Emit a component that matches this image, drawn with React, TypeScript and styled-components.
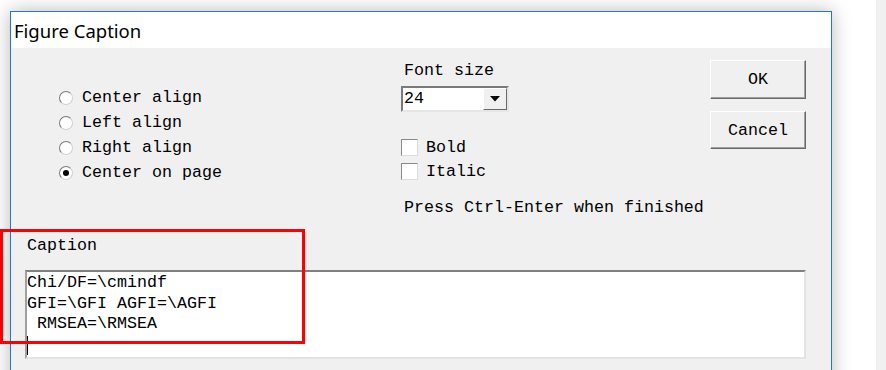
import React from "react";
import styled, { createGlobalStyle } from "styled-components";

const GlobalStyle = createGlobalStyle`
  html, body {
    margin: 0;
    padding: 0;
    background: #ffffff;
    overflow: hidden;
  }
`;

const mono = `"Liberation Mono", "DejaVu Sans Mono", monospace`;

const Desktop = styled.div`
  position: relative;
  width: 886px;
  height: 370px;
  display: flex;
  overflow: hidden;
  background: #ffffff;
`;

const WindowArea = styled.div`
  flex: 1;
  padding: 11px 0 0 10px;
`;

const SideStrip = styled.div`
  width: 10px;
  background: #f0f0f0;
`;

const DialogWindow = styled.div`
  width: 820px;
  height: 420px;
  border: 1px solid #1f7ad4;
  background: #f0f0f0;
  box-shadow: 0 0 18px rgba(0, 0, 0, 0.28);
  display: flex;
  flex-direction: column;
`;

const TitleBar = styled.div`
  height: 36px;
  background: #ffffff;
  display: flex;
  align-items: center;
  padding-left: 3px;
  font-family: "Noto Sans", "Open Sans", sans-serif;
  font-size: 18.5px;
  color: #000;
`;

const Body = styled.div`
  flex: 1;
  display: flex;
  flex-direction: column;
  font-family: ${mono};
  font-size: 16.67px;
  color: #000;
`;

const TopSection = styled.div`
  height: 188px;
  display: flex;
`;

const AlignColumn = styled.div`
  width: 342px;
  padding: 37px 0 0 48px;
`;

const OptionRow = styled.div`
  height: 25px;
  display: flex;
  align-items: center;
  white-space: pre;
`;

const Radio = styled.span<{ $checked?: boolean }>`
  width: 14px;
  height: 14px;
  box-sizing: border-box;
  border-radius: 50%;
  border: 1px solid #7a7a7a;
  border-right-color: #d0d0d0;
  border-bottom-color: #d0d0d0;
  background: #ffffff;
  margin-right: 9px;
  display: flex;
  align-items: center;
  justify-content: center;
  &::after {
    content: "";
    display: ${(p) => (p.$checked ? "block" : "none")};
    width: 6px;
    height: 6px;
    border-radius: 50%;
    background: #000;
  }
`;

const FormatColumn = styled.div`
  width: 309px;
  padding-top: 13px;
  display: flex;
  flex-direction: column;
`;

const Label = styled.div<{ $indent?: number }>`
  height: 20px;
  line-height: 20px;
  padding-left: ${(p) => p.$indent ?? 0}px;
  white-space: pre;
`;

const Select = styled.div`
  margin-top: 5px;
  width: 108px;
  height: 26px;
  box-sizing: border-box;
  border: 2px solid;
  border-color: #7a7a7a #e6e6e6 #e6e6e6 #7a7a7a;
  background: #ffffff;
  display: flex;
  align-items: center;
  justify-content: space-between;
`;

const SelectValue = styled.span`
  padding-left: 1px;
  line-height: 20px;
`;

const DropButton = styled.span`
  width: 24px;
  height: 22px;
  box-sizing: border-box;
  border: 1px solid;
  border-color: #ffffff #696969 #696969 #ffffff;
  background: #f0f0f0;
  display: flex;
  align-items: center;
  justify-content: center;
`;

const CheckList = styled.div`
  margin-top: 23px;
`;

const CheckRow = styled.div`
  height: 24px;
  display: flex;
  align-items: center;
`;

const CheckBox = styled.span`
  width: 17px;
  height: 17px;
  box-sizing: border-box;
  border: 1px solid;
  border-color: #8a8a8a #dcdcdc #dcdcdc #8a8a8a;
  background: #ffffff;
  margin-right: 8px;
`;

const Hint = styled(Label)`
  margin-top: 15px;
`;

const ButtonColumn = styled.div`
  padding-top: 12px;
  display: flex;
  flex-direction: column;
  gap: 12px;
`;

const Button = styled.div<{ $h: number }>`
  width: 96px;
  height: ${(p) => p.$h}px;
  box-sizing: border-box;
  border: 1px solid;
  border-color: #ffffff #696969 #696969 #ffffff;
  box-shadow: inset -1px -1px 0 #a0a0a0;
  background: #f0f0f0;
  display: flex;
  align-items: center;
  justify-content: center;
`;

const CaptionArea = styled.div`
  margin: 14px 0 0 14px;
  width: 781px;
  height: 89px;
  box-sizing: border-box;
  border: 2px solid;
  border-color: #808080 #e3e3e3 #e3e3e3 #a0a0a0;
  background: #ffffff;
  padding: 1px 0 0 0;
  line-height: 20.5px;
`;

const TextLine = styled.div`
  height: 20.5px;
  white-space: pre;
`;

const Caret = styled.span`
  display: inline-block;
  width: 1px;
  height: 19px;
  margin-top: 1px;
  background: #000;
`;

const Annotation = styled.div`
  position: absolute;
  left: 0;
  top: 229px;
  width: 305px;
  height: 115px;
  box-sizing: border-box;
  border: 3px solid #ff0000;
  pointer-events: none;
`;

const alignments = [
  { label: "Center align", checked: false },
  { label: "Left align", checked: false },
  { label: "Right align", checked: false },
  { label: "Center on page", checked: true },
];

const captionLines = ["Chi/DF=\\cmindf", "GFI=\\GFI AGFI=\\AGFI", " RMSEA=\\RMSEA"];

export default function App() {
  return (
    <>
      <GlobalStyle />
      <Desktop>
        <WindowArea>
          <DialogWindow>
            <TitleBar>Figure Caption</TitleBar>
            <Body>
              <TopSection>
                <AlignColumn>
                  {alignments.map((a) => (
                    <OptionRow key={a.label}>
                      <Radio $checked={a.checked} />
                      {a.label}
                    </OptionRow>
                  ))}
                </AlignColumn>
                <FormatColumn>
                  <Label $indent={3}>Font size</Label>
                  <Select>
                    <SelectValue>24</SelectValue>
                    <DropButton>
                      <svg width="10" height="6" viewBox="0 0 10 6">
                        <path d="M0 0 H10 L5 5.5 Z" fill="#000" />
                      </svg>
                    </DropButton>
                  </Select>
                  <CheckList>
                    <CheckRow>
                      <CheckBox />
                      Bold
                    </CheckRow>
                    <CheckRow>
                      <CheckBox />
                      Italic
                    </CheckRow>
                  </CheckList>
                  <Hint $indent={3}>Press Ctrl-Enter when finished</Hint>
                </FormatColumn>
                <ButtonColumn>
                  <Button $h={39}>OK</Button>
                  <Button $h={38}>Cancel</Button>
                </ButtonColumn>
              </TopSection>
              <Label $indent={16}>Caption</Label>
              <CaptionArea>
                {captionLines.map((l) => (
                  <TextLine key={l}>{l}</TextLine>
                ))}
                <TextLine>
                  <Caret />
                </TextLine>
              </CaptionArea>
            </Body>
          </DialogWindow>
        </WindowArea>
        <SideStrip />
        <Annotation />
      </Desktop>
    </>
  );
}
